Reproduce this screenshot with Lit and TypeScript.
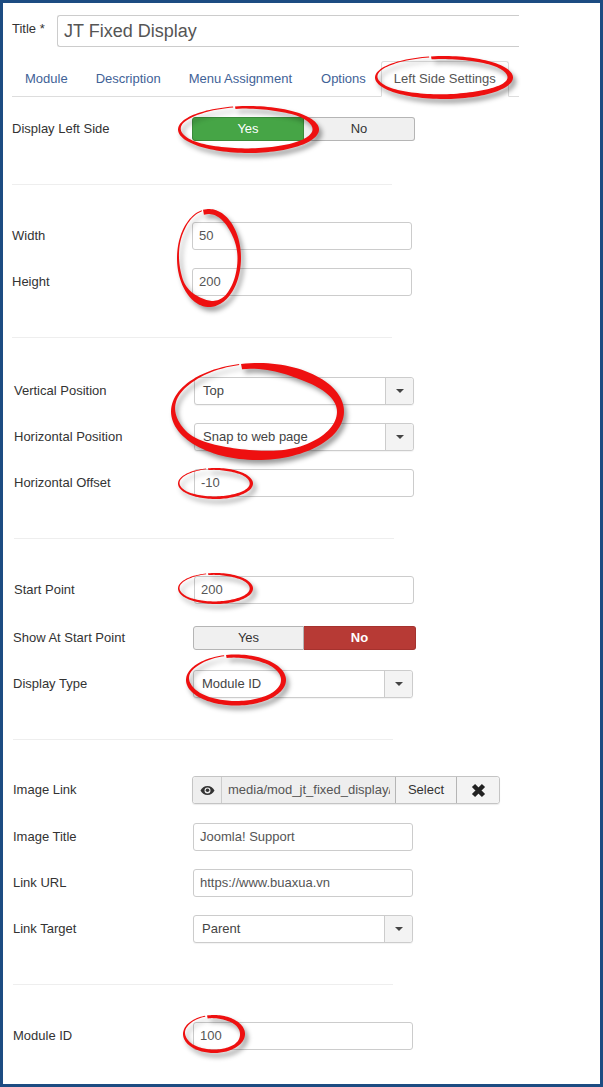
import { LitElement, html, css, svg } from "lit";
import { customElement } from "lit/decorators.js";

interface Ring { cx: number; cy: number; rx: number; ry: number; nx: number; t: number[] }

const RINGS: Ring[] = [
  { cx: 444, cy: 77.5, rx: 69, ry: 21.5, nx: 431, t: [3, 3.5, 5.5, 5.5, 4.5, 3.5, 1.5, 1] },
  { cx: 248.5, cy: 129.5, rx: 70.5, ry: 23.5, nx: 235, t: [2.5, 3.5, 6.5, 5, 4.5, 3.5, 2, 1] },
  { cx: 209, cy: 258, rx: 32, ry: 49, nx: 203, t: [5, 5.5, 3.5, 3.5, 7, 2.5, 1.5, 1] },
  { cx: 257.5, cy: 411.5, rx: 86.5, ry: 48.5, nx: 241, t: [5.5, 10, 7, 7, 10, 6, 2.5, 1] },
  { cx: 215.5, cy: 483.5, rx: 37.5, ry: 15.5, nx: 208, t: [1.8, 2.5, 3.3, 3, 2.5, 2, 1.2, 0.8] },
  { cx: 215.5, cy: 588.5, rx: 37.5, ry: 15.5, nx: 208, t: [1.8, 2.5, 3.3, 3, 2.5, 2, 1.2, 0.8] },
  { cx: 236, cy: 680, rx: 50, ry: 25.5, nx: 226, t: [3, 4, 5, 4.5, 4.5, 4.5, 2, 1] },
  { cx: 214, cy: 1034, rx: 31, ry: 19, nx: 207, t: [3, 4, 5, 3.5, 3.5, 3, 1.5, 0.9] },
];

function ringPath(r: Ring): string {
  const start = Math.asin((r.nx - r.cx) / r.rx);
  const gap = 2 / Math.max(r.rx, r.ry);
  const span = Math.PI * 2 - gap;
  const steps = 120;
  const outer: string[] = [];
  const inner: string[] = [];
  for (let i = 0; i <= steps; i++) {
    const u = i / steps;
    const th = start + u * span;
    const p = u * (r.t.length - 1);
    const k = Math.min(Math.floor(p), r.t.length - 2);
    const f = (1 - Math.cos((p - k) * Math.PI)) / 2;
    const w = r.t[k] + (r.t[k + 1] - r.t[k]) * f;
    const sx = Math.sin(th), cy = Math.cos(th);
    outer.push(`${(r.cx + r.rx * sx).toFixed(2)} ${(r.cy - r.ry * cy).toFixed(2)}`);
    inner.push(`${(r.cx + (r.rx - w) * sx).toFixed(2)} ${(r.cy - (r.ry - w) * cy).toFixed(2)}`);
  }
  return "M" + outer.join("L") + "L" + inner.reverse().join("L") + "Z";
}

@customElement("app-root")
export class AppRoot extends LitElement {
  static styles = css`
    :host {
      display: block;
      position: relative;
      width: 603px;
      height: 1087px;
      font-family: "Liberation Sans", Arial, sans-serif;
      font-size: 13px;
      color: #333;
      background: #fff;
    }
    .frame {
      box-sizing: border-box;
      width: 603px;
      height: 1087px;
      border: 3px solid #1d4c82;
      overflow: hidden;
    }
    .overlay {
      position: absolute;
      top: 0;
      left: 0;
      pointer-events: none;
      filter: drop-shadow(3px 4px 2.5px rgba(0, 0, 0, 0.4));
    }
    .title-row {
      display: flex;
      align-items: center;
      margin-top: 12px;
      padding-left: 9px;
      width: 507px;
    }
    .title-label { width: 45px; flex: none; margin-top: -5px; }
    .title-input {
      flex: 1;
      box-sizing: border-box;
      height: 32px;
      border: 1px solid #ccc;
      border-right: 0;
      border-radius: 3px 0 0 3px;
      font-size: 18px;
      line-height: 30px;
      padding-left: 6px;
      color: #555;
    }
    .tabs {
      display: flex;
      margin: 14px 0 0 9px;
      width: 507px;
      height: 36px;
      box-sizing: border-box;
      border-bottom: 1px solid #ddd;
    }
    .tab {
      box-sizing: border-box;
      height: 36px;
      padding: 0 12px;
      margin-right: 2px;
      border: 1px solid transparent;
      line-height: 33px;
      color: #3f6297;
      white-space: nowrap;
    }
    .tab.wide { padding-right: 13px; }
    .tab.active {
      color: #555;
      border-color: #ddd #ddd #fff;
      border-radius: 3px 3px 0 0;
      background: #fff;
    }
    .row { display: flex; align-items: center; height: 28px; }
    .row.short { height: 24px; }
    .label { width: 180px; flex: none; white-space: nowrap; margin-top: -2px; }
    .x12 { padding-left: 9px; }
    .x13 { padding-left: 10px; }
    .x14 { padding-left: 11px; }
    .gap18 { margin-top: 18px; }
    .gap19 { margin-top: 19px; }
    .mt20 { margin-top: 20px; }
    .mt22 { margin-top: 22px; }
    .mt36 { margin-top: 36px; }
    .mt37 { margin-top: 37px; }
    .mt39 { margin-top: 39px; }
    hr {
      border: 0;
      height: 1px;
      background: #eee;
      width: 380px;
      margin: 41px 0 0 0;
    }
    hr.first { margin-top: 43px; }
    hr.h12 { margin-left: 9px; }
    hr.h13 { margin-left: 10px; }
    hr.h14 { margin-left: 11px; }
    .input, .select {
      box-sizing: border-box;
      width: 220px;
      height: 28px;
      border: 1px solid #ccc;
      border-radius: 3px;
      line-height: 26px;
      color: #555;
      background: #fff;
    }
    .input { padding-left: 6px; }
    .select {
      display: flex;
      box-shadow: 0 1px 1px rgba(0, 0, 0, 0.05);
    }
    .select .val { flex: 1; padding-left: 8px; color: #444; }
    .select .btn {
      width: 27px;
      flex: none;
      display: flex;
      align-items: center;
      justify-content: center;
      background: #f3f3f3;
      border-left: 1px solid #ccc;
      border-radius: 0 3px 3px 0;
    }
    .caret {
      width: 0;
      height: 0;
      border: 4px solid transparent;
      border-top-color: #444;
      border-bottom: 0;
    }
    .toggle { display: flex; height: 24px; width: 223px; box-sizing: border-box; }
    .toggle div {
      box-sizing: border-box;
      line-height: 22px;
      text-align: center;
      border: 1px solid #b5b5b5;
      background: #f0f0f0;
    }
    .toggle .a { width: 112px; border-radius: 3px 0 0 3px; }
    .toggle .a.narrow { width: 111px; }
    .toggle .b { flex: 1; border-left: 0; border-radius: 0 3px 3px 0; }
    .toggle .yes { background: #46a546; border-color: #3a8a3a; color: #fff; }
    .toggle .no { background: #b73a35; border-color: #a5322e; color: #fff; font-weight: bold; }
    .media {
      display: flex;
      width: 308px;
      height: 28px;
      box-sizing: border-box;
      margin-left: -1px;
      border: 1px solid #c4c4c4;
      border-radius: 3px;
      box-shadow: 0 1px 1px rgba(0, 0, 0, 0.08);
    }
    .eye {
      width: 28px;
      flex: none;
      display: flex;
      align-items: center;
      justify-content: center;
      background: #eee;
      border-right: 1px solid #ccc;
      border-radius: 3px 0 0 3px;
    }
    .path {
      width: 173px;
      flex: none;
      box-sizing: border-box;
      padding: 0 5px 0 6px;
      background: #eee;
      color: #555;
      line-height: 26px;
      white-space: nowrap;
    }
    .path span { display: block; overflow: hidden; }
    .sel {
      width: 61px;
      flex: none;
      box-sizing: border-box;
      text-align: center;
      line-height: 26px;
      background: #f3f3f3;
      border-left: 1px solid #b5b5b5;
    }
    .clear {
      flex: 1;
      display: flex;
      align-items: center;
      justify-content: center;
      background: #f3f3f3;
      border-left: 1px solid #b5b5b5;
      border-radius: 0 3px 3px 0;
    }
  `;

  private select(v: string) {
    return html`<div class="select"><div class="val">${v}</div><div class="btn"><div class="caret"></div></div></div>`;
  }

  render() {
    return html`
      <div class="frame">
        <div class="title-row">
          <div class="title-label">Title *</div>
          <div class="title-input">JT Fixed Display</div>
        </div>
        <div class="tabs">
          <div class="tab">Module</div>
          <div class="tab">Description</div>
          <div class="tab wide">Menu Assignment</div>
          <div class="tab">Options</div>
          <div class="tab active">Left Side Settings</div>
        </div>
        <div class="row short x12 mt20">
          <div class="label">Display Left Side</div>
          <div class="toggle"><div class="a yes">Yes</div><div class="b">No</div></div>
        </div>
        <hr class="first h12" />
        <div class="row x12 mt37"><div class="label">Width</div><div class="input">50</div></div>
        <div class="row x12 gap18"><div class="label">Height</div><div class="input">200</div></div>
        <hr class="h12" />
        <div class="row x14 mt39"><div class="label">Vertical Position</div>${this.select("Top")}</div>
        <div class="row x14 gap18"><div class="label">Horizontal Position</div>${this.select("Snap to web page")}</div>
        <div class="row x14 gap18"><div class="label">Horizontal Offset</div><div class="input">-10</div></div>
        <hr class="h14" />
        <div class="row x14 mt37"><div class="label">Start Point</div><div class="input">200</div></div>
        <div class="row short x13 mt22">
          <div class="label">Show At Start Point</div>
          <div class="toggle"><div class="a narrow">Yes</div><div class="b no">No</div></div>
        </div>
        <div class="row x13 mt20"><div class="label">Display Type</div>${this.select("Module ID")}</div>
        <hr class="h13" />
        <div class="row x13 mt36">
          <div class="label">Image Link</div>
          <div class="media">
            <div class="eye">
              <svg width="15" height="11" viewBox="0 0 15 11"><path fill="#333" fill-rule="evenodd" d="M7.5 1C4.3 1 1.8 3 .5 5.5 1.8 8 4.3 10 7.5 10s5.7-2 7-4.5C13.2 3 10.7 1 7.5 1ZM7.5 2.500a3 3 0 1 1 0 6 3 3 0 0 1 0-6Z"/><circle cx="7.5" cy="5.300" r="1.800" fill="#333"/></svg>
            </div>
            <div class="path"><span>media/mod_jt_fixed_display/</span></div>
            <div class="sel">Select</div>
            <div class="clear">
              <svg width="15" height="15" viewBox="0 0 15 15"><path d="M2.500 2.500 12.500 12.500M12.500 2.500 2.500 12.500" stroke="#222" stroke-width="4.500" fill="none"/></svg>
            </div>
          </div>
        </div>
        <div class="row x13 gap19"><div class="label">Image Title</div><div class="input">Joomla! Support</div></div>
        <div class="row x13 gap18"><div class="label">Link URL</div><div class="input">https://www.buaxua.vn</div></div>
        <div class="row x13 gap18"><div class="label">Link Target</div>${this.select("Parent")}</div>
        <hr class="h13" />
        <div class="row x13 mt37"><div class="label">Module ID</div><div class="input">100</div></div>
      </div>
      <svg class="overlay" width="603" height="1087" viewBox="0 0 603 1087">
        ${RINGS.map((r) => svg`<path d=${ringPath(r)} fill="#ee1010"></path>`)}
      </svg>
    `;
  }
}
